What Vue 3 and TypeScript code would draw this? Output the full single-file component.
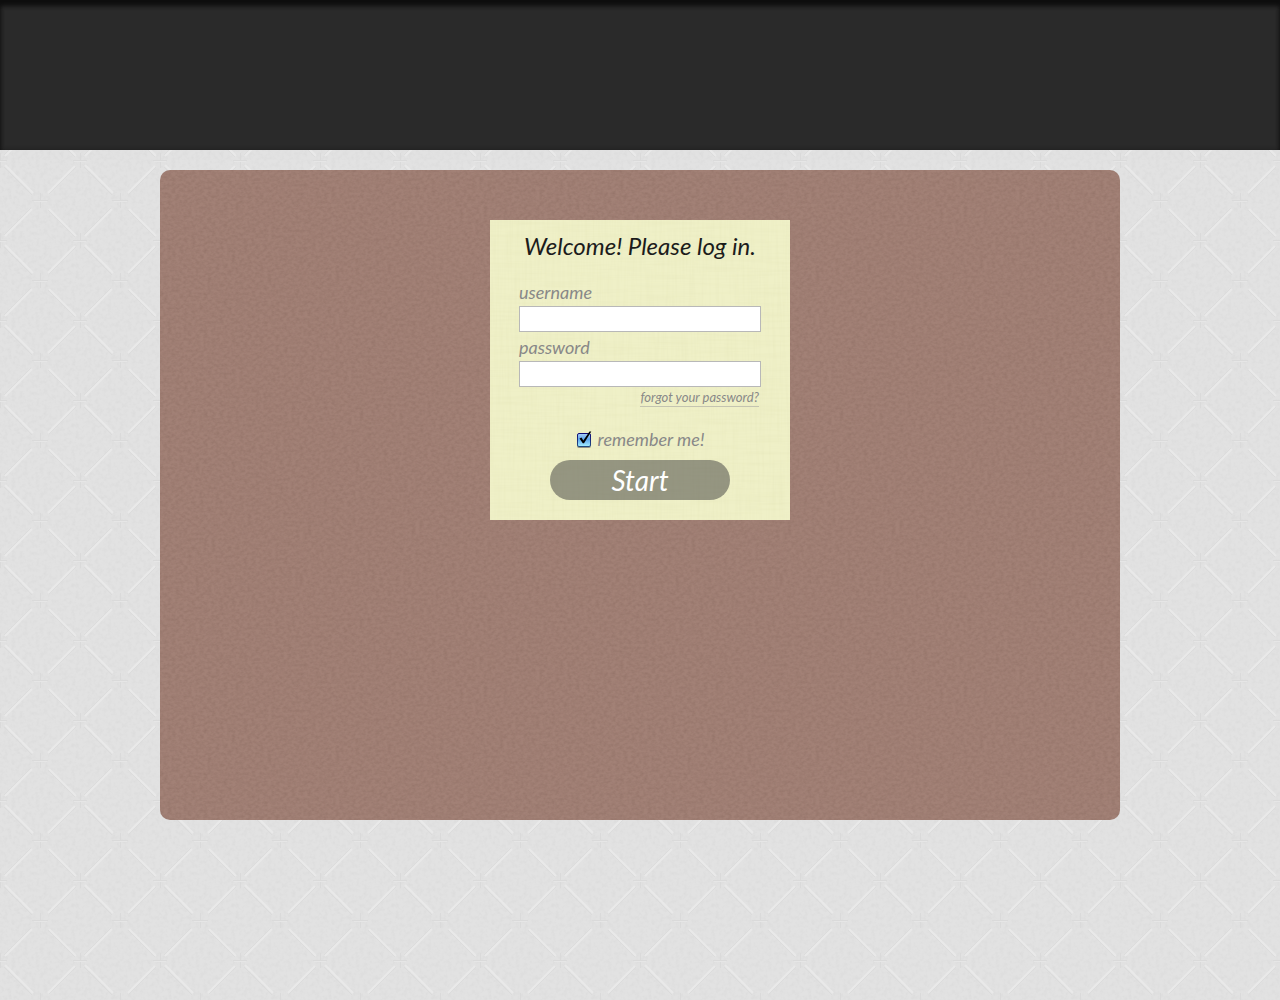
<script setup lang="ts">
import { ref } from 'vue'

const username = ref<string>('')
const password = ref<string>('')
const remember = ref<boolean>(true)
</script>

<template>
  <div class="page">
    <header class="banner"></header>
    <main class="board">
      <form class="note" @submit.prevent>
        <h1 class="title">Welcome! Please log in.</h1>
        <div class="fields">
          <label class="label" for="username">username</label>
          <input id="username" v-model="username" class="text" type="text" />
          <label class="label" for="password">password</label>
          <input id="password" v-model="password" class="text" type="password" />
          <a class="forgot" href="#">forgot your password?</a>
        </div>
        <div class="remember">
          <input id="remember" v-model="remember" class="check" type="checkbox" />
          <label for="remember">remember me!</label>
        </div>
        <button class="start" type="submit">Start</button>
      </form>
    </main>
  </div>
</template>

<style>
body {
  margin: 0;
}
</style>

<style scoped>
.page {
  min-height: 100vh;
  display: flex;
  flex-direction: column;
  font-family: Lato, "Liberation Sans", sans-serif;
  font-style: italic;
  background-color: #e2e2e2;
  background-image:
    url("data:image/svg+xml,%3Csvg xmlns='http://www.w3.org/2000/svg' width='80' height='80'%3E%3Cg fill='none' stroke-width='2'%3E%3Cpath stroke='%23dbdbdb' stroke-width='1' d='M4 7l28 28M49 34l27-27M31 48L4 75M48 50l27 27'/%3E%3Cpath stroke='%23e9e9e9' d='M5 5l28 28M48 33l27-27M32 49L5 76M49 49l27 27'/%3E%3Cpath stroke='%23dadada' stroke-width='1' d='M32 40.500h16M40.500 33v15M0 .5h7M73 .5h7M.5 0v8M.5 73v7'/%3E%3Cpath stroke='%23e6e6e6' stroke-width='1' d='M34 41.500h13M0 1.500h6M74 1.500h6'/%3E%3C/g%3E%3C/svg%3E"),
    url("data:image/svg+xml,%3Csvg xmlns='http://www.w3.org/2000/svg' width='160' height='160'%3E%3Cfilter id='n' x='0' y='0' width='100%25' height='100%25' color-interpolation-filters='sRGB'%3E%3CfeTurbulence type='fractalNoise' baseFrequency='.25' numOctaves='2' seed='4' stitchTiles='stitch'/%3E%3CfeColorMatrix values='0 0 0 0 .7 0 0 0 0 .7 0 0 0 0 .7 .25 0 0 0 -.1'/%3E%3C/filter%3E%3Crect width='160' height='160' filter='url(%23n)'/%3E%3C/svg%3E");
}

.banner {
  height: 150px;
  background: #2a2a2a;
  box-shadow: inset 0 6px 4px #0e0e0e, inset 0 0 4px #1c1c1c;
}

.board {
  box-sizing: border-box;
  width: 75%;
  min-height: 650px;
  margin: 20px auto;
  padding: 50px 20px;
  border-radius: 10px;
  background-color: #a28176;
  background-image: url("data:image/svg+xml,%3Csvg xmlns='http://www.w3.org/2000/svg' width='480' height='480'%3E%3Cfilter id='n' x='0' y='0' width='100%25' height='100%25' color-interpolation-filters='sRGB'%3E%3CfeTurbulence type='fractalNoise' baseFrequency='.25 .35' numOctaves='3' seed='9' stitchTiles='stitch'/%3E%3CfeColorMatrix values='0 0 0 0 .36 0 0 0 0 .24 0 0 0 0 .2 .28 0 0 0 -.09'/%3E%3C/filter%3E%3Crect width='480' height='480' filter='url(%23n)'/%3E%3C/svg%3E");
}

.note {
  box-sizing: border-box;
  width: 300px;
  min-height: 300px;
  margin: 0 auto;
  padding: 10px 29px 20px;
  display: flex;
  flex-direction: column;
  align-items: center;
  background-color: #eff0c7;
  background-image:
    url("data:image/svg+xml,%3Csvg xmlns='http://www.w3.org/2000/svg' width='300' height='300'%3E%3Cfilter id='n' x='0' y='0' width='100%25' height='100%25'%3E%3CfeTurbulence type='fractalNoise' baseFrequency='.02 .4' numOctaves='2' seed='3' stitchTiles='stitch'/%3E%3CfeColorMatrix values='0 0 0 0 .7 0 0 0 0 .7 0 0 0 0 .4 .3 0 0 0 -.12'/%3E%3C/filter%3E%3Crect width='300' height='300' filter='url(%23n)'/%3E%3C/svg%3E"),
    url("data:image/svg+xml,%3Csvg xmlns='http://www.w3.org/2000/svg' width='300' height='300'%3E%3Cfilter id='n' x='0' y='0' width='100%25' height='100%25'%3E%3CfeTurbulence type='fractalNoise' baseFrequency='.4 .02' numOctaves='2' seed='7' stitchTiles='stitch'/%3E%3CfeColorMatrix values='0 0 0 0 .7 0 0 0 0 .7 0 0 0 0 .4 .3 0 0 0 -.12'/%3E%3C/filter%3E%3Crect width='300' height='300' filter='url(%23n)'/%3E%3C/svg%3E");
  color: #888;
  font-size: 18px;
}

.title {
  margin: 0 0 17px;
  color: #1c1c1c;
  font-size: 24px;
  font-weight: 400;
  line-height: 32px;
  white-space: nowrap;
}

.fields {
  align-self: stretch;
  display: flex;
  flex-direction: column;
}

.label {
  line-height: 27px;
}

.text {
  box-sizing: border-box;
  width: 100%;
  height: 26px;
  margin: 0 0 2px;
  padding: 2px 4px;
  border: 1px solid #b8b8b8;
  border-radius: 0;
  background: #fff;
  font-family: inherit;
  font-size: 16px;
}

.text:focus {
  outline: none;
  border-color: #888;
}

.forgot {
  align-self: flex-end;
  margin-right: 2px;
  border-bottom: 1px solid #c4c4b0;
  color: #888;
  font-size: 13px;
  line-height: 17px;
  text-decoration: none;
}

.remember {
  display: flex;
  align-items: center;
  gap: 6px;
  margin: 20px 0 9px;
  line-height: 24px;
}

.check {
  appearance: none;
  width: 16px;
  height: 18px;
  margin: 0;
  background: url("data:image/svg+xml,%3Csvg xmlns='http://www.w3.org/2000/svg' viewBox='0 0 16 18'%3E%3Crect x='1' y='4' width='14' height='14' rx='2' fill='%23777' opacity='.5'/%3E%3Crect x='1.500' y='3.500' width='13' height='13' rx='1.500' fill='%23eee' stroke='%23666'/%3E%3C/svg%3E") center / 16px 18px no-repeat;
}

.check:checked {
  background-image: url("data:image/svg+xml,%3Csvg xmlns='http://www.w3.org/2000/svg' viewBox='0 0 16 18'%3E%3Cdefs%3E%3ClinearGradient id='g' x2='0' y2='1'%3E%3Cstop stop-color='%23a9cdf5'/%3E%3Cstop offset='.45' stop-color='%235ea6ee'/%3E%3Cstop offset='1' stop-color='%23a4f0ff'/%3E%3C/linearGradient%3E%3ClinearGradient id='s' x2='0' y2='1'%3E%3Cstop stop-color='%23100c78'/%3E%3Cstop offset='1' stop-color='%23204a80'/%3E%3C/linearGradient%3E%3C/defs%3E%3Crect x='1' y='4' width='14' height='14' rx='2' fill='%23555' opacity='.6'/%3E%3Crect x='1.500' y='3.500' width='13' height='13' rx='1.500' fill='url(%23g)' stroke='url(%23s)'/%3E%3Cpath d='M3.500 8.500l2-1 1.800 3L13.500 1.500h1.800L8 13.200H6.800z' fill='%23000'/%3E%3C/svg%3E");
}

.start {
  width: 180px;
  height: 40px;
  padding: 0;
  border: 0;
  border-radius: 20px;
  background: rgba(60, 60, 60, 0.5);
  color: #fff;
  font-family: inherit;
  font-size: 28px;
  font-style: inherit;
  line-height: 38px;
  cursor: pointer;
}
</style>
